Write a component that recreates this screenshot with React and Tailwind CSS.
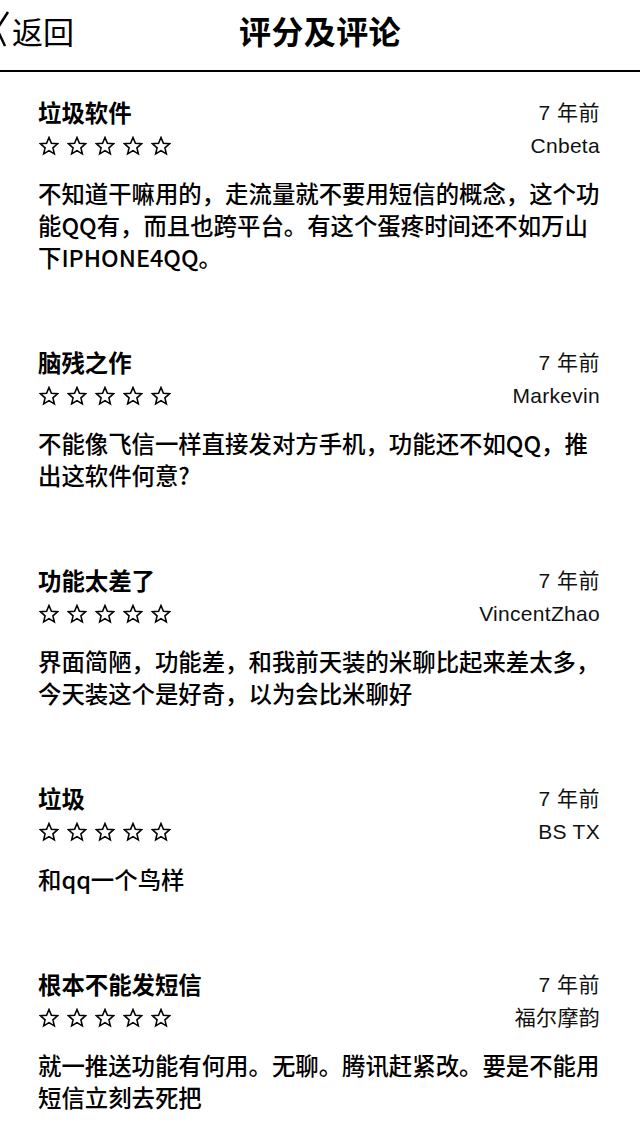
import React from "react";

const reviews = [
  {
    title: "垃圾软件",
    user: "Cnbeta",
    body: "不知道干嘛用的，走流量就不要用短信的概念，这个功能QQ有，而且也跨平台。有这个蛋疼时间还不如万山下IPHONE4QQ。",
  },
  {
    title: "脑残之作",
    user: "Markevin",
    body: "不能像飞信一样直接发对方手机，功能还不如QQ，推出这软件何意?",
  },
  {
    title: "功能太差了",
    user: "VincentZhao",
    body: "界面简陋，功能差，和我前天装的米聊比起来差太多，今天装这个是好奇，以为会比米聊好",
  },
  {
    title: "垃圾",
    user: "BS TX",
    body: "和qq一个鸟样",
  },
  {
    title: "根本不能发短信",
    user: "福尔摩韵",
    body: "就一推送功能有何用。无聊。腾讯赶紧改。要是不能用短信立刻去死把",
  },
];

function Star() {
  return (
    <svg width="20" height="20" viewBox="0 0 24 24" className="shrink-0">
      <path
        d="M12 1.8l2.9 6.9 7.4.6-5.6 4.9 1.7 7.3-6.4-3.9-6.4 3.9 1.7-7.3-5.6-4.9 7.4-.6z"
        fill="none"
        stroke="#000"
        strokeWidth="1.9"
        strokeLinejoin="miter"
      />
    </svg>
  );
}

const cjk = { fontFamily: '"Noto Sans CJK SC", sans-serif' };
const meta = { fontFamily: '"Liberation Sans", "Noto Sans CJK SC", sans-serif' };

export default function App() {
  return (
    <div className="w-[640px] min-h-[1122px] bg-white text-black overflow-hidden" style={cjk}>
      <header className="h-[72px] border-b-2 border-black pt-[8px]">
        <div className="grid grid-cols-[1fr_auto_1fr] items-center h-[44px]">
          <div className="flex items-center">
            <svg width="12" height="44" viewBox="0 0 12 44" className="shrink-0 overflow-visible">
              <path d="M8 4 L-3 21 L5 38" fill="none" stroke="#000" strokeWidth="2.5" />
            </svg>
            <span className="text-[31px] leading-none" style={cjk}>返回</span>
          </div>
          <h1 className="text-[32px] font-bold leading-none tracking-[0.4px]" style={cjk}>评分及评论</h1>
          <div />
        </div>
      </header>
      <main className="pl-[38px] pr-[38px] pt-[24px] flex flex-col gap-[73px]">
        {reviews.map((r) => (
          <section key={r.title}>
            <div className="flex justify-between items-center h-[33px]">
              <span className="text-[23.4px] font-bold leading-[33px]" style={cjk}>{r.title}</span>
              <span className="text-[21px] leading-[33px] text-[#111] pr-[2px] tracking-[0.5px]" style={meta}>7 年前</span>
            </div>
            <div className="flex justify-between items-center h-[33px]">
              <div className="flex items-center gap-[8px] pl-[1px]">
                <Star />
                <Star />
                <Star />
                <Star />
                <Star />
              </div>
              <span className="text-[21px] leading-[33px] text-[#111] pr-[2px] tracking-[0.3px]" style={meta}>{r.user}</span>
            </div>
            <p className="mt-[15px] text-[23.4px] font-medium leading-[32px]" style={cjk}>{r.body}</p>
          </section>
        ))}
      </main>
    </div>
  );
}
